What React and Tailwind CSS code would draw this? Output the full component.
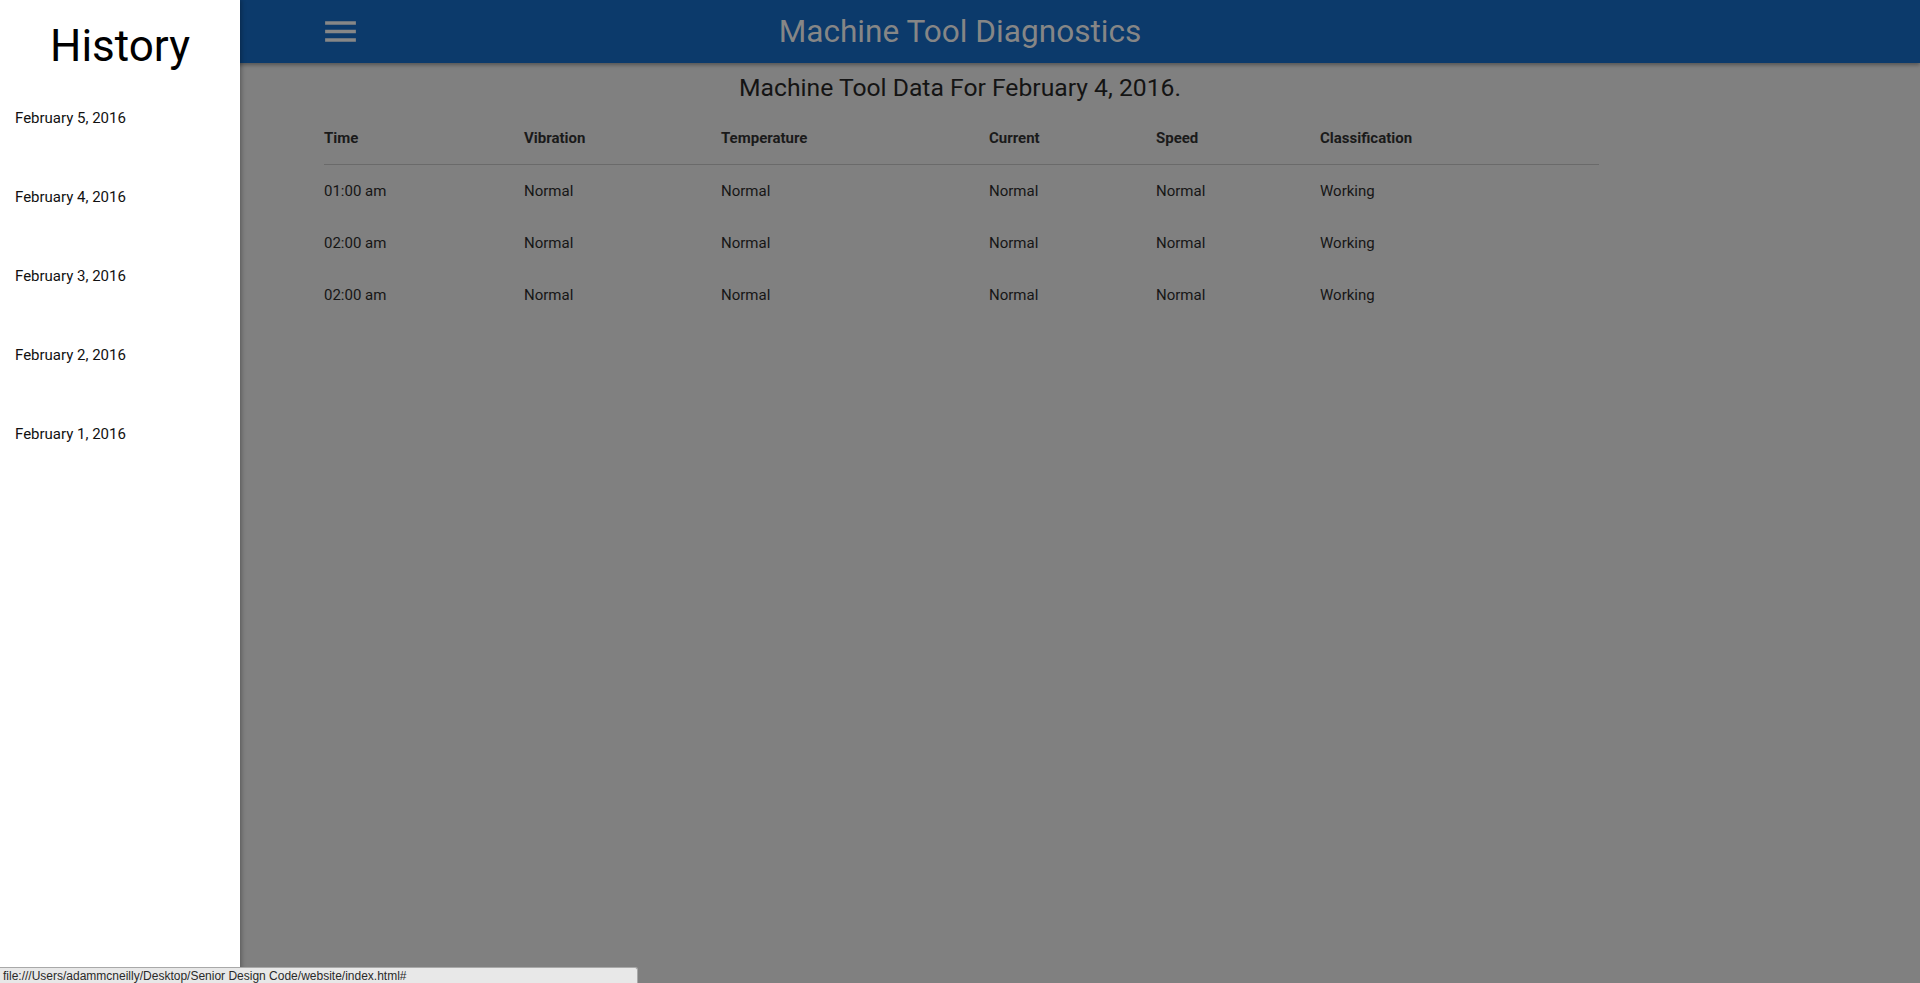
import React from "react";

const dates = [
  "February 5, 2016",
  "February 4, 2016",
  "February 3, 2016",
  "February 2, 2016",
  "February 1, 2016",
];

const columns = ["Time", "Vibration", "Temperature", "Current", "Speed", "Classification"];

const rows = [
  ["01:00 am", "Normal", "Normal", "Normal", "Normal", "Working"],
  ["02:00 am", "Normal", "Normal", "Normal", "Normal", "Working"],
  ["02:00 am", "Normal", "Normal", "Normal", "Normal", "Working"],
];

const MenuIcon = () => (
  <svg width="41" height="41" viewBox="0 0 24 24" fill="#878787">
    <path d="M3 18h18v-2H3v2zm0-5h18v-2H3v2zm0-7v2h18V6H3z" />
  </svg>
);

const App = () => {
  return (
    <div
      className="relative h-screen w-full overflow-hidden bg-[#808080]"
      style={{ fontFamily: "Roboto, 'Noto Sans', sans-serif" }}
    >
      {/* main layout, full width behind the drawer */}
      <div className="flex h-full flex-col">
        <header className="relative z-10 grid h-[63px] shrink-0 grid-cols-[1fr_auto_1fr] items-center bg-[#0c3a6b] shadow-[0_2px_4px_rgba(0,0,0,0.35)]">
          <div className="pl-[320px]">
            <MenuIcon />
          </div>
          <h1 className="text-[31.6px] leading-none text-[#868686]">Machine Tool Diagnostics</h1>
          <div />
        </header>

        <h2 className="mt-[9px] text-center text-[24.7px] leading-8 text-[#141414]">
          Machine Tool Data For February 4, 2016.
        </h2>

        <div className="mx-auto mt-[9px] w-[1278px] pl-[3px]">
          <div className="grid h-[52px] grid-cols-[200px_197px_268px_167px_164px_279px] items-center border-b border-[#6a6a6a] text-[15px] font-bold text-[#1a1a1a]">
            {columns.map((c) => (
              <div key={c}>{c}</div>
            ))}
          </div>
          {rows.map((r, i) => (
            <div
              key={i}
              className="grid h-[52px] grid-cols-[200px_197px_268px_167px_164px_279px] items-center text-[15px] text-[#161616]"
            >
              {r.map((cell, j) => (
                <div key={j}>{cell}</div>
              ))}
            </div>
          ))}
        </div>
      </div>

      {/* drawer */}
      <aside className="absolute left-0 top-0 z-20 flex h-full w-[240px] flex-col bg-white shadow-[2px_0_4px_rgba(0,0,0,0.25)]">
        <div className="pt-5 text-center text-[44px] leading-[52px] text-black">History</div>
        <nav className="mt-[6px] flex flex-col">
          {dates.map((d) => (
            <a key={d} href="#" className="flex h-[79px] items-center pl-[15px] text-[15px] leading-5 text-[#111]">
              {d}
            </a>
          ))}
        </nav>
      </aside>

      {/* browser status bubble */}
      <div
        className="absolute bottom-0 left-0 z-30 flex h-4 w-[638px] items-center rounded-tr-[3px] border border-l-0 border-b-0 border-[#a9a9a9] bg-[#e8e8e8] pl-[3px] text-[12px] text-[#2a2a2a]"
        style={{ fontFamily: "'Liberation Sans', Arial, sans-serif" }}
      >
        file:///Users/adammcneilly/Desktop/Senior Design Code/website/index.html#
      </div>
    </div>
  );
};

export default App;
